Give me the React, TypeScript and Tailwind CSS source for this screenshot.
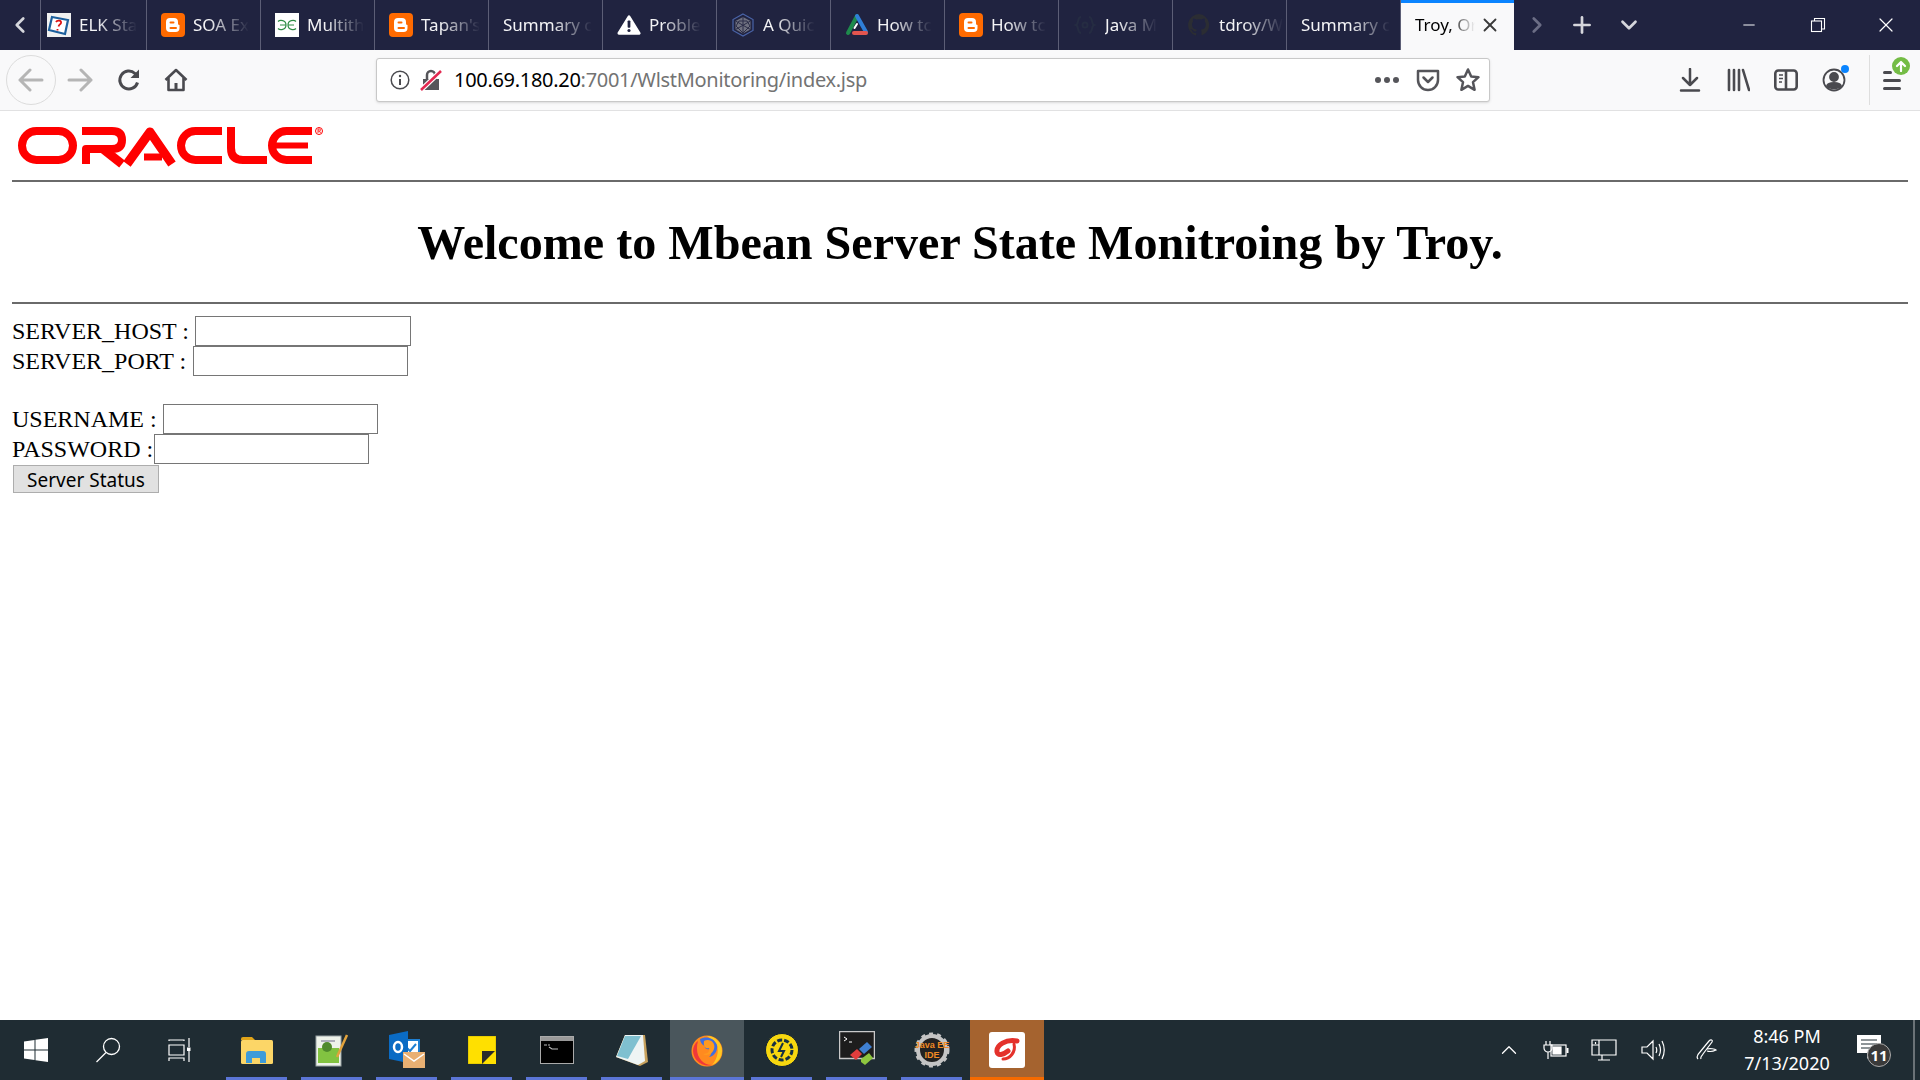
import { X, ChevronLeft, ChevronRight, ChevronDown, Plus, Minus, ChevronUp } from "lucide-react"

const Blogger = () => (
  <svg width="24" height="24" viewBox="0 0 24 24">
    <rect width="24" height="24" rx="4" fill="#ff6a00" />
    <path d="M9 5h4a4 4 0 0 1 4 4v1.500a1.500 1.500 0 0 0 1.500 1.500v3a4 4 0 0 1-4 4H9a4 4 0 0 1-4-4V9a4 4 0 0 1 4-4z" fill="#fff" />
    <rect x="8.500" y="8.500" width="5" height="2" rx="1" fill="#ff6a00" />
    <rect x="8.500" y="14" width="7.500" height="2" rx="1" fill="#ff6a00" />
  </svg>
)

const tabIcons: Record<string, React.ReactNode> = {
  elk: (
    <svg width="24" height="24" viewBox="0 0 24 24">
      <rect width="24" height="24" fill="#f1f1f1" />
      <path d="M5 4 21 7 18 21 2 17z" fill="#fff" stroke="#1c5f9c" strokeWidth="2.200" />
      <path d="M9 9c1-2 6-2 5 1-.5 1.500-2 1.500-2.500 3.500M10.500 16v1.500" fill="none" stroke="#d11" strokeWidth="1.800" />
    </svg>
  ),
  blogger: <Blogger />,
  gg: (
    <svg width="24" height="24" viewBox="0 0 24 24">
      <rect width="24" height="24" fill="#fff" />
      <path d="M3 8.500c2-2 8-1.500 8 3.500s-6 5.500-8 3.500M11 12H5M21 8.500c-2-2-8-1.500-8 3.500s6 5.500 8 3.500M13 12h6" fill="none" stroke="#2f8d46" strokeWidth="1.200" />
    </svg>
  ),
  warn: (
    <svg width="26" height="24" viewBox="0 0 26 24">
      <path d="M13 3 24 21H2z" fill="#fff" stroke="#fff" strokeWidth="3" strokeLinejoin="round" />
      <rect x="11.500" y="7" width="3" height="8" rx="1" fill="#202340" />
      <circle cx="13" cy="18" r="1.700" fill="#202340" />
    </svg>
  ),
  hex: (
    <svg width="24" height="24" viewBox="0 0 24 24" fill="none">
      <path d="M12 1 22 6.500v11L12 23 2 17.500v-11z" stroke="#4a64a8" strokeWidth="1.200" />
      <path d="M12 4 19.500 8v8.500L12 20.500 4.500 16.500V8z" fill="#6f7180" />
      <path d="M12 4v16.500M4.500 8 19.500 16.500M19.500 8 4.500 16.500M8 8h8l3 5-7 7-7-7z" stroke="#2b2d48" strokeWidth="1" />
    </svg>
  ),
  tri: (
    <svg width="24" height="24" viewBox="0 0 24 24" fill="none" strokeWidth="4" strokeLinecap="round">
      <path d="M12 3 3 20" stroke="#1e8a4c" />
      <path d="M12 3 21 19" stroke="#2f7fd8" />
      <path d="M9 20h12" stroke="#e2554f" />
      <path d="M12 11 9.500 15" stroke="#fff" strokeWidth="2" />
    </svg>
  ),
  java: (
    <svg width="24" height="24" viewBox="0 0 24 24" fill="none" stroke="#252c42" strokeWidth="2">
      <path d="M8 4C4 4 6 11 3 12c3 1 1 8 5 8M16 4c4 0 2 7 5 8-3 1-1 8-5 8" />
      <circle cx="12" cy="12" r="2.500" />
    </svg>
  ),
  github: (
    <svg width="24" height="24" viewBox="0 0 24 24">
      <path d="M12 1a11 11 0 0 0-3.500 21.400c.6.100.7-.2.7-.5v-2c-3 .7-3.700-1.400-3.700-1.400-.5-1.300-1.200-1.600-1.200-1.600-1-.7.100-.7.100-.7 1.100.1 1.700 1.100 1.700 1.100 1 1.700 2.600 1.200 3.200.9.100-.7.400-1.200.7-1.500-2.400-.3-5-1.200-5-5.400 0-1.200.4-2.200 1.100-2.900-.1-.3-.5-1.400.1-2.900 0 0 .9-.3 3 1.100a10 10 0 0 1 5.400 0c2.100-1.400 3-1.100 3-1.100.6 1.500.2 2.600.1 2.900.7.700 1.100 1.700 1.100 2.900 0 4.200-2.600 5.100-5 5.400.4.300.7 1 .7 2v3c0 .3.200.6.700.5A11 11 0 0 0 12 1z" fill="#2b2d33" />
    </svg>
  ),
}

const tabs = [
  { title: "ELK Sta", icon: "elk", first: true },
  { title: "SOA Ex", icon: "blogger" },
  { title: "Multith", icon: "gg" },
  { title: "Tapan's", icon: "blogger" },
  { title: "Summary c" },
  { title: "Proble", icon: "warn" },
  { title: "A Quic", icon: "hex" },
  { title: "How tc", icon: "tri" },
  { title: "How tc", icon: "blogger" },
  { title: "Java M", icon: "java" },
  { title: "tdroy/W", icon: "github" },
  { title: "Summary c" },
]

function TabBar() {
  return (
    <div className="flex h-[50px] bg-[#202340] text-[17px] text-[#f4f4f6]">
      <div className="flex w-[41px] shrink-0 items-center justify-center border-r border-[#5c5e76]">
        <ChevronLeft size={26} strokeWidth={2.5} className="text-[#d5d6dc]" />
      </div>
      {tabs.map((t, i) => (
        <div
          key={i}
          className={`flex shrink-0 items-center border-r border-[#5c5e76] ${t.first ? "w-[106px] pl-[6px]" : "w-[114px] pl-[14px]"}`}
        >
          {t.icon && <div className="mr-[8px] flex h-6 w-6 shrink-0 items-center justify-center">{tabIcons[t.icon]}</div>}
          <div className="whitespace-nowrap [mask-image:linear-gradient(to_left,transparent,black_40px)]">
            {t.title}
          </div>
        </div>
      ))}
      <div className="relative flex w-[113px] shrink-0 items-center bg-[#f9f9fa] pl-[14px] pr-2 text-black">
        <div className="absolute left-0 right-0 top-0 h-[3px] bg-[#0a84ff]" />
        <div className="w-[60px] whitespace-nowrap [mask-image:linear-gradient(to_left,transparent,black_26px)]">
          Troy, Or
        </div>
        <X size={22} strokeWidth={2} className="ml-[4px] text-[#3a3a3a]" />
      </div>
      <div className="flex w-[45px] items-center justify-center">
        <ChevronRight size={26} strokeWidth={2.5} className="text-[#6b6d85]" />
      </div>
      <div className="flex w-[45px] items-center justify-center">
        <Plus size={26} strokeWidth={2.5} className="text-[#d5d6dc]" />
      </div>
      <div className="flex w-[50px] items-center justify-center">
        <ChevronDown size={26} strokeWidth={2.5} className="text-[#d5d6dc]" />
      </div>
      <div className="ml-auto flex">
        <div className="flex w-[69px] items-center justify-center">
          <Minus size={18} strokeWidth={1.3} className="text-white" />
        </div>
        <div className="flex w-[69px] items-center justify-center">
          <svg width="16" height="16" viewBox="0 0 16 16" fill="none" stroke="#fff" strokeWidth="1.100">
            <rect x="1.500" y="4" width="10" height="10.500" />
            <path d="M4.500 4V1.500h10V12H11.500" />
          </svg>
        </div>
        <div className="flex w-[68px] items-center justify-center">
          <X size={24} strokeWidth={1.2} className="text-white" />
        </div>
      </div>
    </div>
  )
}

function NavBar() {
  return (
    <div className="flex h-[61px] items-center border-b border-[#e1e1e2] bg-[#f9f9fa]">
      <div className="ml-[6px] flex h-[50px] w-[50px] items-center justify-center rounded-full border border-[#dcdcdc]">
        <svg width="26" height="26" viewBox="0 0 26 26" fill="none" stroke="#b5b5b5" strokeWidth="3" strokeLinecap="round" strokeLinejoin="round">
          <path d="M2 13h22M12 3 2 13l10 10" />
        </svg>
      </div>
      <div className="ml-[11px] flex w-[26px] items-center justify-center">
        <svg width="26" height="26" viewBox="0 0 26 26" fill="none" stroke="#b5b5b5" strokeWidth="3" strokeLinecap="round" strokeLinejoin="round">
          <path d="M24 13H2M14 3l10 10-10 10" />
        </svg>
      </div>
      <div className="ml-[24px] flex w-6 items-center justify-center">
        <svg width="24" height="24" viewBox="0 0 24 24" fill="none" stroke="#4a4a4f" strokeWidth="3">
          <path d="M20.500 14.500A9 9 0 1 1 18 5.500L21 8" />
          <path d="M22 1.500V10h-8.500z" fill="#4a4a4f" stroke="none" />
        </svg>
      </div>
      <div className="ml-[23px] flex w-6 items-center justify-center">
        <svg width="24" height="24" viewBox="0 0 24 24" fill="none" stroke="#4a4a4f" strokeWidth="2.600" strokeLinejoin="round">
          <path d="M1.500 12 12 2l10.500 10M4.500 10v12h15V10" />
          <rect x="10.500" y="15" width="3" height="7" fill="#4a4a4f" stroke="none" />
        </svg>
      </div>
      <div className="ml-[188px] flex h-[44px] w-[1114px] items-center rounded-[3px] border border-[#c8c8c8] bg-white shadow-sm">
        <svg className="ml-[13px]" width="20" height="20" viewBox="0 0 20 20" fill="none" stroke="#4a4a4f" strokeWidth="1.500">
          <circle cx="10" cy="10" r="8.800" />
          <path d="M10 9v6" strokeWidth="2" />
          <circle cx="10" cy="6" r="1.200" fill="#4a4a4f" stroke="none" />
        </svg>
        <svg className="ml-[10px]" width="22" height="24" viewBox="0 0 22 24" fill="none">
          <path d="M3 11h16v11H3z" fill="#55555a" />
          <path d="M7 11V7a4 4 0 0 1 8 0v4" stroke="#55555a" strokeWidth="2.500" />
          <path d="M1 22 21 3" stroke="#fff" strokeWidth="5" />
          <path d="M1 22 21 3" stroke="#e22850" strokeWidth="2.500" />
        </svg>
        <div className="ml-[12px] whitespace-nowrap text-[20px] tracking-[-0.3px] text-black">
          100.69.180.20<span className="text-[#737373]">:7001/WlstMonitoring/index.jsp</span>
        </div>
        <div className="ml-auto flex items-center">
          <div className="flex gap-[3px]">
            <span className="h-[6px] w-[6px] rounded-full bg-[#55555a]" />
            <span className="h-[6px] w-[6px] rounded-full bg-[#55555a]" />
            <span className="h-[6px] w-[6px] rounded-full bg-[#55555a]" />
          </div>
          <svg className="ml-[17px]" width="24" height="24" viewBox="0 0 24 24" fill="none" stroke="#55555a" strokeWidth="2.500" strokeLinecap="round" strokeLinejoin="round">
            <path d="M2 3h20v9a10 10 0 0 1-20 0z" />
            <path d="m7.500 9.500 4.500 4.500 4.500-4.500" />
          </svg>
          <svg className="ml-[15px] mr-[8px]" width="26" height="26" viewBox="0 0 26 26" fill="none" stroke="#55555a" strokeWidth="2.500" strokeLinejoin="round">
            <path d="m13 2.500 3.200 7 7.300.7-5.500 5 1.600 7.600-6.600-3.900-6.600 3.900L8 15.200l-5.500-5 7.300-.7z" />
          </svg>
        </div>
      </div>
      <div className="ml-[188px] flex w-6 items-center justify-center">
        <svg width="24" height="24" viewBox="0 0 24 24" fill="none" stroke="#4a4a4f" strokeWidth="2.500" strokeLinecap="round" strokeLinejoin="round">
          <path d="M12 1v16M5 10l7 7 7-7M3 22.500h18" />
        </svg>
      </div>
      <div className="ml-[24px] flex w-6 items-center justify-center">
        <svg width="24" height="24" viewBox="0 0 24 24" fill="none" stroke="#4a4a4f" strokeWidth="2.600" strokeLinecap="round">
          <path d="M3 2v20M8 2v20M13 2v20M17 2l6 20" />
        </svg>
      </div>
      <div className="ml-[24px] flex w-6 items-center justify-center">
        <svg width="24" height="24" viewBox="0 0 24 24" fill="none" stroke="#4a4a4f" strokeWidth="2.600">
          <rect x="1.300" y="2.500" width="21.400" height="19" rx="3" />
          <path d="M12 2.500v19" />
          <path d="M5 7h4M5 10.500h4M5 14h3" strokeWidth="1.500" />
        </svg>
      </div>
      <div className="relative ml-[24px] flex w-6 items-center justify-center">
        <svg width="24" height="24" viewBox="0 0 24 24" fill="none" stroke="#4a4a4f" strokeWidth="1.800">
          <circle cx="12" cy="12" r="10.500" />
          <circle cx="12" cy="9" r="4" fill="#4a4a4f" />
          <path d="M5 18c1-4 13-4 14 0-2 3-12 3-14 0z" fill="#4a4a4f" />
        </svg>
        <span className="absolute right-[-3px] top-[-3px] h-[8px] w-[8px] rounded-full bg-[#0a84ff]" />
      </div>
      <div className="ml-[23px] h-[50px] w-px bg-[#dedede]" />
      <div className="relative ml-[13px] flex w-6 flex-col gap-[5px]">
        <span className="h-[3px] w-[9px] rounded bg-[#4a4a4f]" />
        <span className="h-[3px] w-[18px] rounded bg-[#4a4a4f]" />
        <span className="h-[3px] w-[18px] rounded bg-[#4a4a4f]" />
        <div className="absolute right-[-3px] top-[-14px] flex h-[18px] w-[18px] items-center justify-center rounded-full bg-[#74bc45]">
          <svg width="12" height="12" viewBox="0 0 12 12" fill="none" stroke="#fff" strokeWidth="2.200" strokeLinecap="round" strokeLinejoin="round">
            <path d="M6 11V2M2 6l4-4 4 4" />
          </svg>
        </div>
      </div>
    </div>
  )
}

function OracleLogo() {
  return (
    <svg width="320" height="56" viewBox="0 0 320 56" fill="none" stroke="#ff0000" strokeWidth="8">
      <rect x="12" y="13" width="51" height="29" rx="14.500" />
      <path d="M72 13h30q10 0 10 9t-10 9H76v15" strokeLinejoin="round" />
      <path d="M93 31 112 46" strokeWidth="9" />
      <path d="M117 46 140 14 162 46" strokeWidth="9" strokeLinejoin="round" />
      <path d="M134 39h18" strokeWidth="7" />
      <path d="M212 13h-26.500a14.500 14.500 0 0 0 0 29H212" />
      <path d="M221 9v21q0 12 12 12h24" />
      <path d="M302 13h-25.500a14.500 14.500 0 0 0 0 29H302" />
      <path d="M264 27.500h34" strokeWidth="6" />
      <circle cx="309" cy="13" r="3.500" strokeWidth="1" />
      <path d="M308 15v-4h1.500a1 1 0 0 1 0 2H308M309.500 13l1 2" strokeWidth="0.800" />
    </svg>
  )
}

function Page() {
  return (
    <div className="h-[909px] px-3 font-['Liberation_Serif',serif] text-[24px] leading-[30px] text-black">
      <div className="ml-[-2px] h-[69px] pt-[7px]">
        <OracleLogo />
      </div>
      <hr className="h-[2px] border-0 bg-[#6a6a6a]" />
      <h1 className="flex h-[120px] items-center justify-center pt-[2px] text-[48.1px] font-bold">
        Welcome to Mbean Server State Monitroing by Troy.
      </h1>
      <hr className="h-[2px] border-0 bg-[#6a6a6a]" />
      <form className="mt-3">
        <div className="flex items-center">
          <label>SERVER_HOST :</label>
          <input className="ml-[6px] h-[30px] w-[216px] border border-[#767676] bg-white" />
        </div>
        <div className="flex items-center">
          <label>SERVER_PORT :</label>
          <input className="ml-[7px] h-[30px] w-[215px] border border-[#767676] bg-white" />
        </div>
        <div className="mt-7 flex items-center">
          <label>USERNAME :</label>
          <input className="ml-[6px] h-[30px] w-[215px] border border-[#767676] bg-white" />
        </div>
        <div className="flex items-center">
          <label>PASSWORD :</label>
          <input className="ml-px h-[30px] w-[215px] border border-[#767676] bg-white" />
        </div>
        <button
          type="button"
          className="ml-px mt-px flex h-[28px] w-[146px] items-center justify-center border border-[#adadad] bg-[#e1e1e1] pt-[2px] font-['Noto_Sans',sans-serif] text-[19px]"
        >
          Server Status
        </button>
      </form>
    </div>
  )
}

const taskIcons: React.ReactNode[] = [
  <svg key="folder" width="32" height="28" viewBox="0 0 32 28">
    <path d="M0 3a2 2 0 0 1 2-2h9l3 3H0z" fill="#e0a419" />
    <rect y="4" width="32" height="24" rx="1.500" fill="#fcd667" />
    <path d="M5 27v-9a3 3 0 0 1 3-3h14a3 3 0 0 1 3 3v9h-6v-5h-8v5z" fill="#3e9bd9" />
  </svg>,
  <svg key="npp" width="34" height="34" viewBox="0 0 34 34">
    <rect x="1" y="3" width="25" height="30" fill="#eef3ea" stroke="#9aa3a5" />
    <rect x="3" y="15" width="21" height="15" fill="#82c341" />
    <circle cx="12" cy="14" r="5" fill="#4f8a2c" />
    <path d="M6 8h14" stroke="#99a" strokeWidth="1.500" />
    <path d="M22 24 32 2" stroke="#e2a33c" strokeWidth="2.500" />
  </svg>,
  <svg key="outlook" width="38" height="38" viewBox="0 0 38 38">
    <rect x="14" y="9" width="17" height="17" fill="#fff" stroke="#1e7fd2" strokeWidth="2" />
    <path d="m18 16 4 4 6-7" fill="none" stroke="#1e7fd2" strokeWidth="2" />
    <path d="M1 4 20 0v32L1 28z" fill="#0a6bc4" />
    <ellipse cx="10" cy="16" rx="4" ry="5" fill="none" stroke="#fff" strokeWidth="2.500" />
    <rect x="15" y="21" width="22" height="16" fill="#e9b073" />
    <path d="m16 23 10 7 10-7" fill="none" stroke="#fff" strokeWidth="1.500" />
  </svg>,
  <svg key="sticky" width="28" height="28" viewBox="0 0 28 28">
    <rect width="28" height="28" fill="#ffe000" stroke="#d1b900" />
    <path d="M14 28V15h13z" fill="#2a2a2a" />
    <path d="M16 28 28 16v12z" fill="#ffe000" />
  </svg>,
  <svg key="cmd" width="34" height="28" viewBox="0 0 34 28">
    <rect x="0.500" y="0.500" width="33" height="27" fill="#000" stroke="#aaa" />
    <rect x="1" y="1" width="32" height="4" fill="#999" />
    <path d="M4 9h3M8 9h2M9 11l3 2h6" stroke="#bbb" strokeWidth="1.200" fill="none" />
  </svg>,
  <svg key="notepad" width="34" height="34" viewBox="0 0 34 34">
    <path d="M10 2h20l3 27-8 4L1 24z" fill="#c7a15d" />
    <path d="M10 2h18l2 26-7 4L1 24z" fill="#eef4f4" />
    <path d="M10 3h16L13 26 2 23z" fill="#7fc0d0" />
  </svg>,
  <svg key="firefox" width="34" height="34" viewBox="0 0 34 34">
    <circle cx="17" cy="18" r="15.500" fill="#ff8a1f" />
    <path d="M17 3a15 15 0 0 1 15 15 15 15 0 0 1-10 14C28 26 30 14 25 9z" fill="#ffc923" />
    <path d="M3 18a15 15 0 0 0 19 14C12 32 4 22 8 8 5 10 3 14 3 18z" fill="#f0383a" />
    <path d="M10 6c5-3 14-2 17 6 1 5-2 11-8 12 3-3 3-6 1-8-3 1-6-1-5-3-3-1-5-4-5-7z" fill="#3f6fe0" />
    <path d="M14 8c6-3 12 2 10 8-2 6-8 7-11 5 5 0 7-3 6-6-2 1-6 0-5-7z" fill="#ff9a1f" />
  </svg>,
  <svg key="gear" width="34" height="34" viewBox="0 0 34 34">
    <circle cx="17" cy="17" r="16.500" fill="#f7d70f" stroke="#123" />
    <circle cx="17" cy="17" r="10" fill="none" stroke="#153044" strokeWidth="3" strokeDasharray="5 2" />
    <path d="m18 10-4 8h5l-3 6" fill="none" stroke="#153044" strokeWidth="2" />
  </svg>,
  <svg key="term" width="36" height="38" viewBox="0 0 36 38">
    <rect x="0.500" y="0.500" width="35" height="27" fill="#1d1d1d" stroke="#c9c9c9" strokeWidth="1.500" />
    <path d="m5 6 3 2-3 2M10 11h3" stroke="#fff" fill="none" />
    <path d="m11 24 7-6 5 5-6 6z" fill="#e23d3d" />
    <path d="m20 18 8-7 5 5-8 7z" fill="#3f7fd1" />
    <path d="m22 28 8-6 4 5-8 7-4-3z" fill="#8dc63f" />
  </svg>,
  <svg key="java" width="36" height="36" viewBox="0 0 36 36">
    <circle cx="18" cy="18" r="14" fill="#222" stroke="#c4c4c4" strokeWidth="4" />
    <circle cx="18" cy="18" r="16" fill="none" stroke="#c4c4c4" strokeWidth="3" strokeDasharray="4 4" />
    <text x="18" y="16" textAnchor="middle" fontSize="9" fontWeight="700" fill="#f08a24" fontFamily="Liberation Sans, sans-serif">Java EE</text>
    <text x="18" y="26" textAnchor="middle" fontSize="9" fontWeight="700" fill="#f08a24" fontFamily="Liberation Sans, sans-serif">IDE</text>
  </svg>,
  <div key="airtel" className="flex h-9 w-9 items-center justify-center rounded-[3px] bg-white">
    <svg width="30" height="30" viewBox="0 0 30 30" fill="none" stroke="#e4312b" strokeLinecap="round">
      <path d="M25 6C14 4 4 10 5 17c1 4 6 3 11-1" strokeWidth="5" />
      <path d="M22 9c2 8-4 15-11 15" strokeWidth="3" />
    </svg>
  </div>,
]

function Taskbar() {
  return (
    <div className="flex h-[60px] bg-[#1f2c33] text-white">
      <div className="flex w-[72px] items-center justify-center">
        <svg width="24" height="24" viewBox="0 0 24 24" fill="#fff">
          <path d="M0 3.500 10.500 2v9.500H0zM11.500 1.800 24 0v11.500H11.500zM0 12.500h10.500V22L0 20.500zM11.500 12.500H24V24l-12.500-1.800z" />
        </svg>
      </div>
      <div className="flex w-[72px] items-center justify-center">
        <svg width="26" height="26" viewBox="0 0 26 26" fill="none" stroke="#fff" strokeWidth="1.300">
          <circle cx="16.500" cy="9.500" r="8" />
          <path d="M11 15.500 1.500 25" />
        </svg>
      </div>
      <div className="mr-[3px] flex w-[72px] items-center justify-center">
        <svg width="24" height="24" viewBox="0 0 24 24" fill="none" stroke="#fff" strokeWidth="1.200">
          <path d="M1 3v-1h15v1M1 7h15v10H1zM1 23v-3h15v3M21 0v9M21 13v11" />
          <rect x="19" y="9.500" width="3.500" height="3.500" fill="#fff" stroke="none" />
        </svg>
      </div>
      {taskIcons.map((icon, i) => {
        const active = i === 6
        const alert = i === 10
        return (
          <div
            key={i}
            className={`relative flex items-center justify-center ${active || alert ? "ml-px w-[74px]" : "w-[75px]"} ${active ? "bg-[#4a565c]" : ""} ${alert ? "bg-[#a5632f]" : ""}`}
          >
            {icon}
            {!alert && <span className={`absolute bottom-0 h-[3px] bg-[#5b75d6] ${active ? "inset-x-0" : "inset-x-[7px]"}`} />}
            {alert && <span className="absolute inset-x-0 bottom-0 h-[3px] bg-[#f56a00]" />}
          </div>
        )
      })}
      <div className="ml-auto flex items-center">
        <ChevronUp size={26} strokeWidth={1.2} className="mr-[21px]" />
        <svg className="mr-[22px]" width="26" height="20" viewBox="0 0 26 20" fill="none" stroke="#fff" strokeWidth="1.200">
          <path d="M3 1v4M7 1v4M1 5h8v3a4 4 0 0 1-8 0zM5 12v7" />
          <rect x="8" y="5" width="15" height="11" />
          <rect x="10" y="7" width="8" height="7" fill="#fff" />
          <path d="M24.500 8v5" strokeWidth="2" />
        </svg>
        <svg className="mr-[24px]" width="26" height="24" viewBox="0 0 26 24" fill="none" stroke="#fff" strokeWidth="1.200">
          <path d="M8 2h17v15H1V2h7v15M11 17v5M7 22h12M1 7h7" />
          <path d="M4.500 4v2" />
        </svg>
        <svg className="mr-[31px]" width="24" height="22" viewBox="0 0 24 22" fill="none" stroke="#fff" strokeWidth="1.200">
          <path d="M1 8h5l6-6v18l-6-6H1zM15 8c1 2 1 4 0 6M18 5c2 4 2 8 0 12M21 2c3 6 3 12 0 18" />
        </svg>
        <svg className="mr-[13px]" width="22" height="24" viewBox="0 0 22 24" fill="none" stroke="#fff" strokeWidth="1.200">
          <path d="M2 21c-2-2 0-5 2-7l9-11c2-2 4-1 3 1l-9 12c-1 2-3 3-2 5 M11 11c3-1 8 0 9 1-2 1-6 2-9 1" />
        </svg>
        <div className="mr-[14px] flex w-[112px] flex-col items-center text-[18px] leading-[27px]">
          <span>8:46 PM</span>
          <span>7/13/2020</span>
        </div>
        <div className="relative mr-[32px] h-[34px] w-[24px]">
          <svg width="24" height="26" viewBox="0 0 24 26" className="mt-[2px]">
            <path d="M0 0h24v18h-10l-4 6v-6H0z" fill="#fff" />
            <path d="M4 5h16M4 9h16M4 13h16" stroke="#1f2c33" strokeWidth="1.200" />
          </svg>
          <span className="absolute left-[10px] top-[10px] flex h-[24px] w-[24px] items-center justify-center rounded-full border border-[#aaa] bg-[#3a3a3a] text-[15px] font-bold leading-none">
            11
          </span>
        </div>
        <div className="h-full w-[2px] bg-[#6a7277]" />
        <div className="w-[5px]" />
      </div>
    </div>
  )
}

export default function App() {
  return (
    <div className="h-[1080px] w-[1920px] overflow-hidden bg-white font-['Noto_Sans',sans-serif]">
      <TabBar />
      <NavBar />
      <Page />
      <Taskbar />
    </div>
  )
}
